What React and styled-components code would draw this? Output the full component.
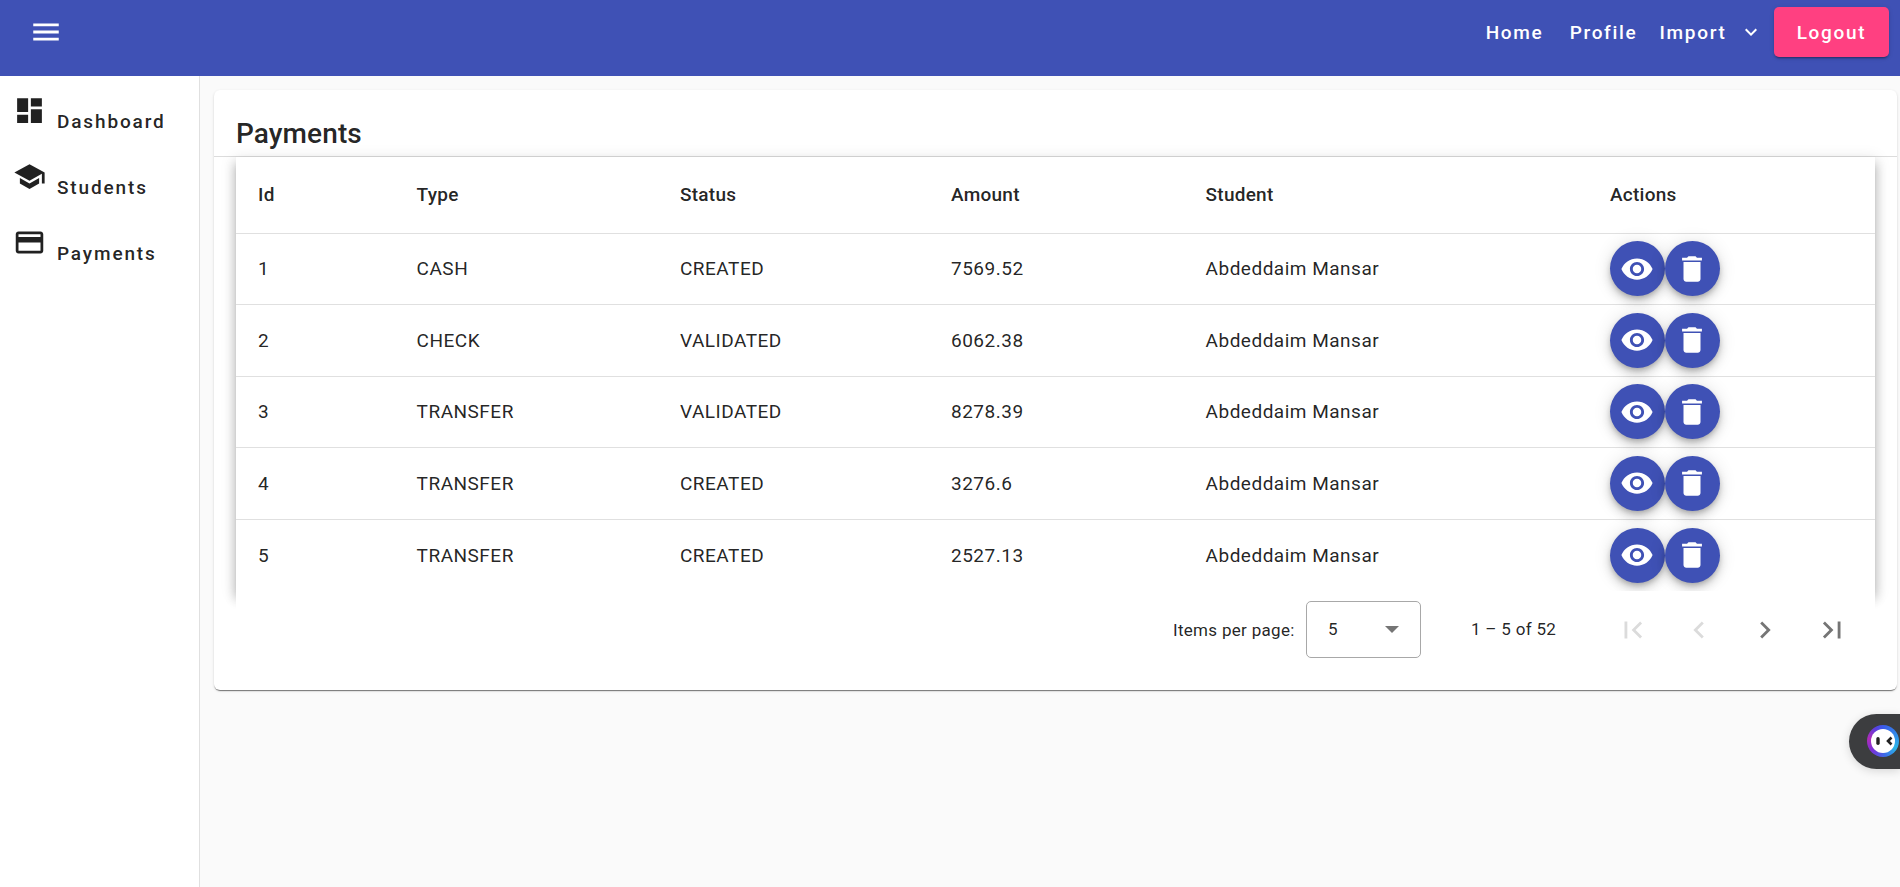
import React from 'react';
import styled, { createGlobalStyle } from 'styled-components';

const Global = createGlobalStyle`
  html, body { margin: 0; padding: 0; height: 100%; background: #fafafa; }
  body { font-family: Roboto, "Noto Sans", sans-serif; color: rgba(0,0,0,.87); overflow: hidden; }
  * { box-sizing: border-box; }
`;

const Page = styled.div`display:flex;flex-direction:column;height:100vh;position:relative;`;
const Toolbar = styled.header`
  height:76px;flex:none;background:#3f51b5;color:#fff;display:flex;align-items:flex-start;justify-content:space-between;
  padding:7px 11px 0 29px;
`;
const MenuButton = styled.button`
  border:0;background:none;padding:0;color:#fff;width:34px;height:50px;display:flex;align-items:center;
`;
const MenuIcon = styled.svg`width:34px;height:34px;fill:#fff;margin-top:-1px;`;
const Nav = styled.nav`display:flex;align-items:center;height:50px;font-size:19px;font-weight:500;letter-spacing:1.7px;`;
const NavLink = styled.a`
  color:#fff;margin-right:${p => p.$mr}px;white-space:nowrap;
`;
const Chevron = styled.svg`width:24px;height:24px;margin-right:11px;fill:#fff;`;
const LogoutButton = styled.button`
  width:115px;height:50px;border:0;border-radius:5px;background:#ff4081;color:#fff;
  font:500 19px Roboto,sans-serif;letter-spacing:1.7px;
  box-shadow:0 3px 1px -2px rgba(0,0,0,.2),0 2px 2px 0 rgba(0,0,0,.14),0 1px 5px 0 rgba(0,0,0,.12);
`;
const Body = styled.div`flex:1;display:flex;min-height:0;`;
const Sidebar = styled.aside`
  width:200px;flex:none;background:#fff;border-right:1px solid #e0e0e0;padding:18px 0 0 13px;
`;
const SideItem = styled.a`
  display:flex;align-items:flex-end;height:66px;padding-bottom:33px;font-size:19px;font-weight:500;letter-spacing:1.85px;color:rgba(0,0,0,.87);
  line-height:11px;
`;
const SideIcon = styled.svg`width:33px;height:33px;margin-right:11px;fill:rgba(0,0,0,.87);flex:none;`;
const Main = styled.main`flex:1;min-width:0;padding:14px 3px 0 14px;`;
const Card = styled.section`
  background:#fff;border-radius:6px;height:600px;
  box-shadow:0 2px 1px -1px rgba(0,0,0,.4),0 1px 1px 0 rgba(0,0,0,.14),0 1px 3px 0 rgba(0,0,0,.12);
  overflow:hidden;
`;
const CardHeader = styled.div`
  height:67px;border-bottom:1px solid #dcdcdc;padding:29px 22px 0;
`;
const Title = styled.h1`margin:0;font-size:28px;line-height:30px;font-weight:500;letter-spacing:.1px;`;
const TableArea = styled.div`padding:0 22px;`;
const Table = styled.table`
  width:1639px;border-collapse:collapse;table-layout:fixed;background:#fff;font-size:19px;
  box-shadow:0 5px 5px -3px rgba(0,0,0,.2),0 8px 10px 1px rgba(0,0,0,.2),0 3px 14px 2px rgba(0,0,0,.1);
`;
const Th = styled.th`
  height:76px;padding:0 0 0 22px;text-align:left;font-weight:500;font-size:19px;letter-spacing:.25px;border-bottom:1px solid #e0e0e0;
`;
const Td = styled.td`
  height:71.5px;padding:0 0 0 22px;font-weight:400;letter-spacing:.5px;border-bottom:1px solid #e0e0e0;color:rgba(0,0,0,.87);
`;
const LastTd = styled(Td)`border-bottom:0;`;
const Actions = styled.div`display:flex;gap:0;`;
const Fab = styled.button`
  width:55px;height:55px;border-radius:50%;border:0;background:#3f51b5;padding:0;display:flex;align-items:center;justify-content:center;
  box-shadow:0 3px 5px -1px rgba(0,0,0,.2),0 6px 10px 0 rgba(0,0,0,.14),0 1px 18px 0 rgba(0,0,0,.12);
`;
const FabIcon = styled.svg`width:34px;height:34px;fill:#fff;`;
const Paginator = styled.div`
  position:relative;background:#fff;height:77px;display:flex;align-items:flex-start;padding-left:937px;font-size:17px;
  color:rgba(0,0,0,.87);
`;
const PageLabel = styled.span`margin-top:29px;line-height:20px;letter-spacing:.3px;width:133px;white-space:nowrap;`;
const SelectBox = styled.div`
  width:115px;height:57px;margin-top:10px;border:1px solid #a8a8a8;border-radius:5px;display:flex;align-items:center;justify-content:space-between;
  padding:0 21px 0 21px;font-size:17px;
`;
const Caret = styled.span`width:0;height:0;border-left:7px solid transparent;border-right:7px solid transparent;border-top:7px solid rgba(0,0,0,.54);`;
const RangeLabel = styled.span`margin:28px 0 0 50px;line-height:20px;letter-spacing:.3px;width:85px;white-space:nowrap;`;
const PageButtons = styled.div`display:flex;margin:22px 0 0 60px;gap:32.2px;`;
const PageIcon = styled.svg`width:34px;height:34px;fill:${p => p.$disabled ? 'rgba(0,0,0,.14)' : 'rgba(0,0,0,.54)'};`;
const ChatWidget = styled.div`
  position:absolute;right:0;top:714px;width:51px;height:55px;background:#3c3d3f;border-radius:28px 0 0 28px;
  box-shadow:0 2px 10px rgba(0,0,0,.15);overflow:hidden;
`;
const ChatRing = styled.div`
  position:absolute;left:18px;top:11px;width:32px;height:32px;border-radius:50%;padding:4px;
  background:conic-gradient(#3a5ae8,#2ab5e8 120deg,#3a6ee8 170deg,#7a2fd8 230deg,#b02bb8 280deg,#5a3fe0 330deg,#3a5ae8);
`;
const ChatFace = styled.div`width:24px;height:24px;border-radius:50%;background:#fff;`;
const Eyes = styled.svg`display:block;width:24px;height:24px;`;

const Ico = ({ as: C, d, ...r }) => <C viewBox="0 0 24 24" {...r}><path d={d} /></C>;

const P = {
  menu: 'M3 18h18v-2H3v2zm0-5h18v-2H3v2zm0-7v2h18V6H3z',
  more: 'M16.59 8.59L12 13.17 7.41 8.59 6 10l6 6 6-6z',
  dash: 'M3 13h8V3H3v10zm0 8h8v-6H3v6zm10 0h8V11h-8v10zm0-18v6h8V3h-8z',
  school: 'M5 13.18v4L12 21l7-3.82v-4L12 17l-7-3.82zM12 3L1 9l11 6 9-4.91V17h2V9L12 3z',
  card: 'M20 4H4c-1.11 0-1.99.89-1.99 2L2 18c0 1.11.89 2 2 2h16c1.11 0 2-.89 2-2V6c0-1.11-.89-2-2-2zm0 14H4v-6h16v6zm0-10H4V6h16v2z',
  eye: 'M12 4.5C7 4.5 2.73 7.61 1 12c1.73 4.39 6 7.5 11 7.5s9.27-3.11 11-7.5c-1.73-4.39-6-7.5-11-7.5zM12 17c-2.76 0-5-2.24-5-5s2.24-5 5-5 5 2.24 5 5-2.24 5-5 5zm0-8c-1.66 0-3 1.34-3 3s1.34 3 3 3 3-1.34 3-3-1.34-3-3-3z',
  del: 'M6 19c0 1.1.9 2 2 2h8c1.1 0 2-.9 2-2V7H6v12zM19 4h-3.5l-1-1h-5l-1 1H5v2h14V4z',
  first: 'M18.41 16.59L13.82 12l4.59-4.59L17 6l-6 6 6 6zM6 6h2v12H6z',
  prev: 'M15.41 7.41L14 6l-6 6 6 6 1.41-1.41L10.83 12z',
  next: 'M10 6L8.59 7.41 13.17 12l-4.58 4.59L10 18l6-6z',
  last: 'M5.59 7.41L10.18 12l-4.59 4.59L7 18l6-6-6-6zM16 6h2v12h-2z',
};

const rows = [
  [1, 'CASH', 'CREATED', '7569.52'],
  [2, 'CHECK', 'VALIDATED', '6062.38'],
  [3, 'TRANSFER', 'VALIDATED', '8278.39'],
  [4, 'TRANSFER', 'CREATED', '3276.6'],
  [5, 'TRANSFER', 'CREATED', '2527.13'],
];
const widths = [158.6, 263.4, 271, 254.6, 404.4, 287];

export default function App() {
  return (
    <Page>
      <Global />
      <Toolbar>
        <MenuButton aria-label="menu"><Ico as={MenuIcon} d={P.menu} /></MenuButton>
        <Nav>
          <NavLink $mr={26.2}>Home</NavLink>
          <NavLink $mr={22}>Profile</NavLink>
          <NavLink $mr={12.4}>Import</NavLink>
          <Ico as={Chevron} d={P.more} />
          <LogoutButton>Logout</LogoutButton>
        </Nav>
      </Toolbar>
      <Body>
        <Sidebar>
          <SideItem><Ico as={SideIcon} d={P.dash} />Dashboard</SideItem>
          <SideItem><Ico as={SideIcon} d={P.school} />Students</SideItem>
          <SideItem><Ico as={SideIcon} d={P.card} />Payments</SideItem>
        </Sidebar>
        <Main>
          <Card>
            <CardHeader><Title>Payments</Title></CardHeader>
            <TableArea>
              <Table>
                <colgroup>{widths.map((w, i) => <col key={i} style={{ width: w }} />)}</colgroup>
                <thead>
                  <tr>{['Id', 'Type', 'Status', 'Amount', 'Student', 'Actions'].map(h => <Th key={h}>{h}</Th>)}</tr>
                </thead>
                <tbody>
                  {rows.map((r, i) => {
                    const C = i === rows.length - 1 ? LastTd : Td;
                    return (
                      <tr key={r[0]}>
                        {r.map((v, j) => <C key={j}>{v}</C>)}
                        <C>Abdeddaim Mansar</C>
                        <C>
                          <Actions>
                            <Fab aria-label="view"><Ico as={FabIcon} d={P.eye} /></Fab>
                            <Fab aria-label="delete"><Ico as={FabIcon} d={P.del} /></Fab>
                          </Actions>
                        </C>
                      </tr>
                    );
                  })}
                </tbody>
              </Table>
              <Paginator>
                <PageLabel>Items per page:</PageLabel>
                <SelectBox>5<Caret /></SelectBox>
                <RangeLabel>1 – 5 of 52</RangeLabel>
                <PageButtons>
                  <Ico as={PageIcon} $disabled d={P.first} />
                  <Ico as={PageIcon} $disabled d={P.prev} />
                  <Ico as={PageIcon} d={P.next} />
                  <Ico as={PageIcon} d={P.last} />
                </PageButtons>
              </Paginator>
            </TableArea>
          </Card>
        </Main>
      </Body>
      <ChatWidget>
        <ChatRing><ChatFace><Eyes viewBox="0 0 24 24"><rect x="5.3" y="8" width="3.4" height="8" rx="1.7" fill="#222" /><path d="M20.5 8.5 L17 12 L20.5 15.5" fill="none" stroke="#222" strokeWidth="2.6" /></Eyes></ChatFace></ChatRing>
      </ChatWidget>
    </Page>
  );
}
